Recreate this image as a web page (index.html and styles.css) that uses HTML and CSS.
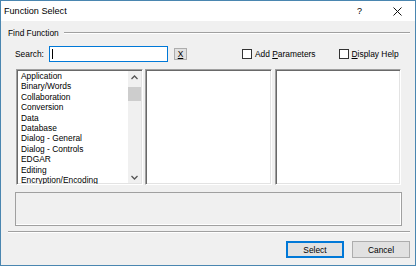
FILE: index.html
```html
<!DOCTYPE html>
<html>
  <head>
    <title>Function Select</title>
    <link rel="stylesheet" href="styles.css">
  </head>
  <body>
    <div class="window">
      <div class="titlebar">
        <span class="title">Function Select</span>
        <span class="help">?</span>
        <span class="close">
          <svg width="9" height="9" viewBox="0 0 9 9"><path d="M0.5 0.5 L8.5 8.5 M8.5 0.5 L0.5 8.5" stroke="#111" stroke-width="1"/></svg>
        </span>
      </div>
      <div class="client">
        <div class="group-head">
          <span>Find Function</span>
          <div class="etch"></div>
        </div>
        <div class="search-row">
          <span class="search-label">Search:</span>
          <div class="search-box"><span class="caret"></span></div>
          <div class="clear"><u>X</u></div>
          <div class="check first"><span class="box"></span><span>Add <u>P</u>arameters</span></div>
          <div class="check second"><span class="box"></span><span><u>D</u>isplay Help</span></div>
        </div>
        <div class="lists">
          <div class="list cats">
            <div class="items">
              <div>Application</div>
              <div>Binary/Words</div>
              <div>Collaboration</div>
              <div>Conversion</div>
              <div>Data</div>
              <div>Database</div>
              <div>Dialog - General</div>
              <div>Dialog - Controls</div>
              <div>EDGAR</div>
              <div>Editing</div>
              <div>Encryption/Encoding</div>
            </div>
            <div class="scrollbar">
              <div class="arrow">
                <svg width="7" height="5" viewBox="0 0 7 5"><path d="M0.5 4 L3.5 1 L6.5 4" fill="none" stroke="#555" stroke-width="1.3"/></svg>
              </div>
              <div class="thumb"></div>
              <div class="track"></div>
              <div class="arrow">
                <svg width="7" height="5" viewBox="0 0 7 5"><path d="M0.5 1 L3.5 4 L6.5 1" fill="none" stroke="#555" stroke-width="1.3"/></svg>
              </div>
            </div>
          </div>
          <div class="list functions"></div>
          <div class="list params"></div>
        </div>
        <div class="status"></div>
        <div class="etch sep"></div>
        <div class="buttons">
          <div class="btn default">Select</div>
          <div class="btn">Cancel</div>
        </div>
      </div>
    </div>
  </body>
</html>
```

FILE: styles.css
```css
body {
  margin: 0px;
  font-family: 'Liberation Sans', Arial, sans-serif;
  font-size: 8.4px;
  color: #000000;
}
.window {
  width: 416px;
  height: 266px;
  box-sizing: border-box;
  border: 1px solid #4a86b0;
  background-color: #f0f0f0;
  display: flex;
  flex-direction: column;
}
.titlebar {
  height: 20px;
  background-color: #ffffff;
  display: flex;
  align-items: center;
}
.title {
  font-size: 9.1px;
  padding-left: 3px;
  flex: 1;
}
.help {
  font-size: 9px;
  width: 10px;
  margin-right: 26px;
}
.close {
  width: 9px;
  height: 9px;
  margin-right: 13px;
  margin-top: 1px;
}
.close svg {
  display: block;
}
.client {
  flex: 1;
  display: flex;
  flex-direction: column;
}
.group-head {
  margin-top: 6px;
  height: 11px;
  padding-left: 7px;
  padding-right: 5px;
  display: flex;
  align-items: center;
}
.etch {
  border-top: 1px solid #a0a0a0;
  border-bottom: 1px solid #ffffff;
  box-sizing: border-box;
  height: 2px;
}
.group-head .etch {
  flex: 1;
  margin-left: 5px;
  margin-top: 1px;
}
.search-row {
  margin-top: 8px;
  height: 16px;
  padding-left: 14px;
  display: flex;
  align-items: center;
}
.search-label {
  width: 34px;
}
.search-box {
  width: 119px;
  height: 16px;
  box-sizing: border-box;
  border: 1px solid #0078d7;
  background-color: #ffffff;
  display: flex;
  align-items: center;
  padding-left: 2px;
}
.caret {
  width: 1px;
  height: 10px;
  background-color: #000000;
}
.clear {
  margin-left: 6px;
  width: 13px;
  height: 12px;
  box-sizing: border-box;
  border: 1px solid #adadad;
  background-color: #e1e1e1;
  display: flex;
  align-items: center;
  justify-content: center;
}
.check {
  display: flex;
  align-items: center;
}
.check.first {
  margin-left: 55px;
}
.check.second {
  margin-left: 23px;
}
.box {
  width: 10px;
  height: 10px;
  box-sizing: border-box;
  border: 1px solid #333333;
  background-color: #ffffff;
  margin-right: 3px;
}
.lists {
  margin-top: 7px;
  height: 116px;
  padding-left: 15px;
  display: flex;
}
.list {
  box-sizing: border-box;
  height: 116px;
  background-color: #ffffff;
  border: 1px solid;
  border-color: #a0a0a0 #ffffff #ffffff #a0a0a0;
  box-shadow: inset 1px 1px 0 #696969, inset -1px -1px 0 #e3e3e3;
}
.cats {
  width: 127px;
  display: flex;
  overflow: hidden;
}
.functions {
  width: 127px;
  margin-left: 2px;
}
.params {
  width: 126px;
  margin-left: 3px;
}
.items {
  flex: 1;
  padding-left: 4px;
  padding-top: 1px;
  line-height: 10.4px;
  white-space: nowrap;
  overflow: hidden;
}
.scrollbar {
  width: 13px;
  margin: 1px 1px 1px 0;
  background-color: #f0f0f0;
  display: flex;
  flex-direction: column;
}
.arrow {
  height: 12px;
  display: flex;
  align-items: center;
  justify-content: center;
}
.thumb {
  margin-top: 4px;
  height: 14px;
  background-color: #cdcdcd;
}
.track {
  flex: 1;
}
.status {
  margin: 7px 13px 0 14px;
  height: 34px;
  box-sizing: border-box;
  border: 1px solid #a0a0a0;
  box-shadow: inset -1px -1px 0 #ffffff;
}
.sep {
  margin: 5px 5px 0 7px;
}
.buttons {
  margin-top: 8px;
  padding-right: 5px;
  display: flex;
  justify-content: flex-end;
  gap: 8px;
}
.btn {
  width: 58px;
  height: 17px;
  box-sizing: border-box;
  border: 1px solid #adadad;
  background-color: #e1e1e1;
  display: flex;
  align-items: center;
  justify-content: center;
}
.btn.default {
  border: 2px solid #0078d7;
}
```
